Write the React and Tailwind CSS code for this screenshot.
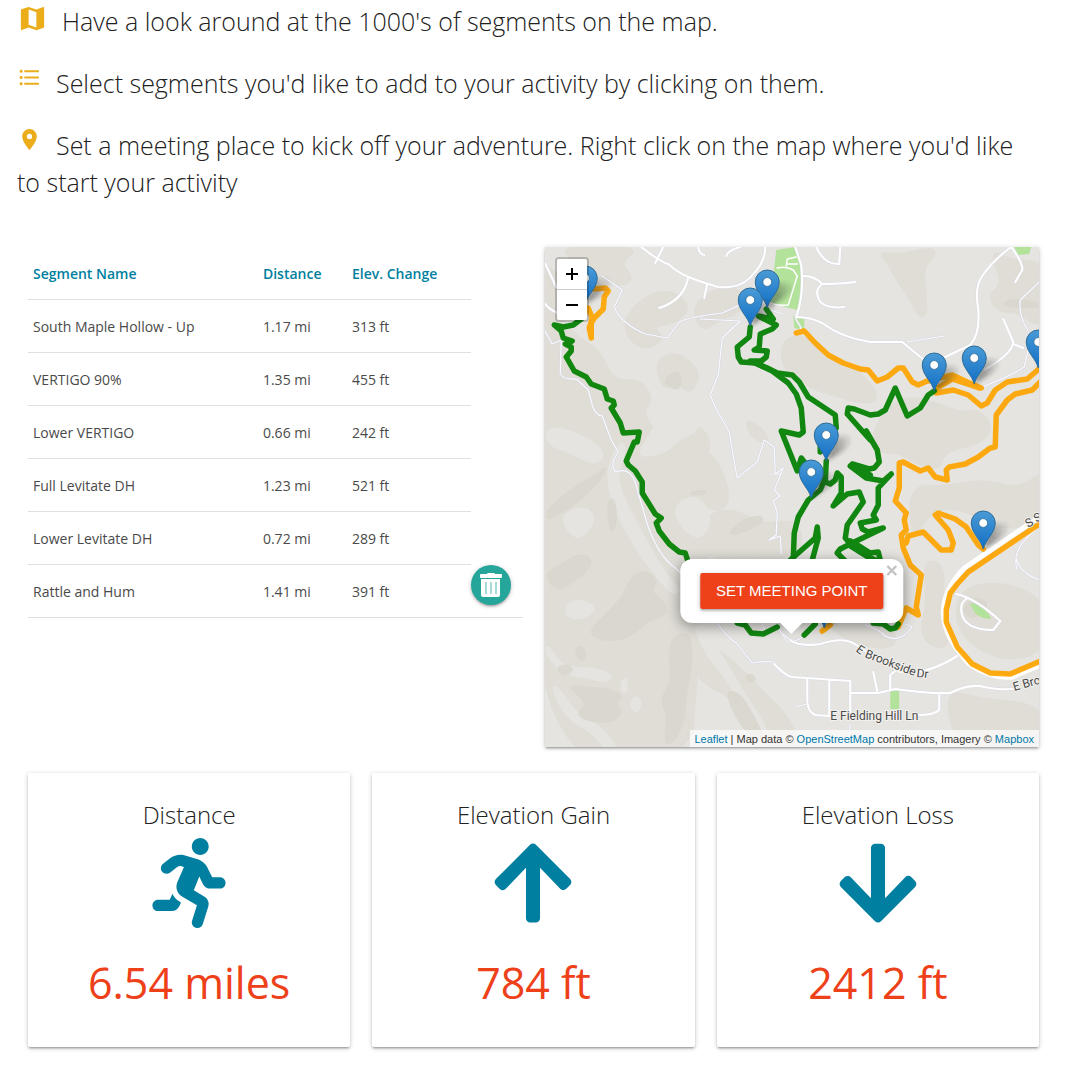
import React from "react";
import { MdMap, MdFormatListBulleted, MdPlace } from "react-icons/md";
import { FaRunning, FaArrowUp, FaArrowDown } from "react-icons/fa";

const segments = [
  ["South Maple Hollow - Up", "1.17 mi", "313 ft"],
  ["VERTIGO 90%", "1.35 mi", "455 ft"],
  ["Lower VERTIGO", "0.66 mi", "242 ft"],
  ["Full Levitate DH", "1.23 mi", "521 ft"],
  ["Lower Levitate DH", "0.72 mi", "289 ft"],
  ["Rattle and Hum", "1.41 mi", "391 ft"],
];

const totals = [
  { title: "Distance", Icon: FaRunning, value: "6.54 miles" },
  { title: "Elevation Gain", Icon: FaArrowUp, value: "784 ft" },
  { title: "Elevation Loss", Icon: FaArrowDown, value: "2412 ft" },
];

const hills = [
  "530,262 556,270 568,300 560,322 574,336 600,352 612,382 640,380 652,400 640,412 660,440 690,420 712,440 700,470 716,500 690,520 712,560 690,600 700,640 694,690 690,760 530,760",
  "560,247 640,247 618,262 634,280 612,286 600,276 590,290 576,262",
  "640,300 668,290 690,306 676,322 650,326 664,340 640,350 622,326",
  "700,298 728,286 745,296 740,312 716,320 704,330 694,316",
  "655,362 676,352 700,372 690,394 676,380 664,390",
  "783,340 806,336 826,356 860,372 880,400 860,402 834,394 806,386 782,366",
  "880,253 900,256 928,249 936,252 922,268 924,290 926,316 918,314 912,300 900,284 888,262",
  "990,250 1012,262 1045,262 1045,330 1016,310 1000,312 988,296 1004,284",
  "700,520 730,508 762,526 800,520 800,560 700,560",
  "900,396 938,404 960,414 980,410 992,430 976,444 944,450 938,470 916,462 900,452 880,452 872,430",
  "910,486 946,488 980,480 1020,490 1045,470 1045,520 1000,530 960,506 930,510 912,540",
  "960,590 1000,582 1045,600 1045,650 1008,660 976,648 956,624",
  "924,560 944,566 940,610 950,650 920,640 928,600",
  "690,640 720,650 760,690 790,720 800,755 770,755 740,700 696,680",
  "944,690 980,700 1045,706 1045,755 960,755",
  "748,420 764,432 768,442 758,440 748,430",
  "700,448 718,462 730,500 716,512 700,500",
  "816,590 870,600 900,640 880,650 830,632",
];

const valleys = [
  "548,426 580,434 606,452 596,466 570,452 546,444",
  "660,420 690,412 706,402 700,430 676,440 668,452 636,458 648,436",
  "562,514 586,506 596,520 580,540 566,530",
  "570,600 590,602 596,612 576,620 564,614",
  "545,642 560,664 574,668 592,668 612,674 608,682 588,678 566,674 548,660",
  "550,684 562,692 574,712 596,724 612,740 616,750 606,750 592,732 566,718",
  "680,500 700,496 712,520 700,540 684,530 674,514",
  "692,620 712,640 730,670 748,700 768,730 762,734 742,706 726,678 704,652",
  "620,440 626,450 614,480 640,530 662,570 680,590 672,596 640,556 612,506 606,470",
  "638,714 641,700 634,696 630,706",
  "622,680 627,678 626,694 621,690",
];

const ridges = [
  "546,512 562,496 580,484 592,478 608,464 600,480 580,500 562,512 548,520",
  "608,502 613,498 616,510 615,528 611,532 608,518",
  "546,572 560,566 576,554 592,558 588,570 574,580 562,590 550,584",
  "588,632 606,614 622,598 630,578 644,570 658,580 650,592 664,602 668,614 648,620 636,632 620,640 600,640",
  "668,650 676,634 690,634 692,662 686,690 684,720 674,742 664,744 668,716 660,700 672,680",
  "566,684 588,688 604,688 624,696 614,704 622,712 612,722 590,722 576,714 588,704",
  "664,380 676,370 682,380 678,390 668,386",
  "726,536 740,522 758,515 764,520 750,530",
  "726,690 740,694 752,714 764,738 756,742 742,726 732,710",
  "1000,304 1018,298 1045,306 1020,308",
  "962,610 974,596 990,604 972,620",
  "574,648 582,646 586,656 580,662",
  "556,668 566,664 574,670 564,676",
  "690,492 704,490 706,494 692,495",
  "746,676 752,674 756,680 748,682",
];

const roads = [
  "M544,262 Q549,272 556,287 M544,303 Q550,311 560,314",
  "M641,247 Q660,262 668,264 Q677,272 686,276 Q700,282 718,287 Q742,289 753,274 Q765,262 765,247",
  "M688,277 Q684,300 659,308 M707,284 L704,298 M655,263 L663,247 M698,247 Q699,254 704,255 M726,256 Q728,250 740,247",
  "M795,247 L801,265 Q804,295 796,317 Q810,317 822,323 Q842,338 870,342 L902,342 L925,361",
  "M803,276 Q815,276 822,284 Q840,284 855,282 M822,284 Q813,290 820,302 Q828,309 844,307 M816,247 Q824,265 839,264 L840,247",
  "M945,357 L970,345 Q980,334 978,309 Q974,287 982,276 Q993,260 1011,247 Q1023,263 1022,270 L1015,282 M1003,319 L1013,342 Q1012,354 984,370 M1013,344 L1023,348",
  "M790,640 Q798,647 820,644 Q844,636 856,645 Q884,664 900,672 Q925,676 957,656",
  "M774,664 Q785,676 792,677 L850,681 L850,712 M807,679 L807,702 Q808,712 815,715 L830,716 M829,681 L829,714 M850,693 L878,693 L895,689 Q930,694 950,693 Q970,683 984,687 Q1005,691 1016,688 M873,672 L877,691 M890,690 L890,675 L896,670 M939,695 L939,710 Q934,715 918,715",
  "M956,594 Q975,598 1000,621 L993,630 Q963,630 961,611 Q960,603 966,599",
];

const trails = [
  "M602,276 L622,290 L614,307 Q620,323 645,334 L667,338 L679,322 Q689,317 722,313 L744,303 M700,319 L740,321 L722,338 L718,375 L710,395 L715,407 L729,432 L734,462 L737,478 L757,462 L764,440 L774,447 L775,474 L783,468 L774,490 L780,496 L773,501 L777,512 L776,535 L769,540 L780,536 L781,554 M781,474 L770,474",
  "M544,330 L552,344 L561,340 L560,374 Q564,380 576,379 L588,390 L592,405 Q595,415 602,416 L611,440 L618,452 Q609,464 615,472 Q631,466 636,486 L647,524 Q658,556 675,568 L700,590 Q716,630 736,643 L752,663 Q763,661 774,662 L780,672 L790,677",
  "M907,342 L944,336 M1039,282 L1020,300 Q1018,316 1028,331 M982,387 Q1010,376 1024,367 L1028,350 M757,612 L765,631 M774,622 L787,642 Q802,642 816,624 M865,625 Q880,630 885,636 Q900,644 912,627 L905,624 M795,318 L801,328 L796,334 M795,644 L780,632 M1016,559 Q1020,573 1039,580 M1035,530 Q1010,550 1017,570 M770,310 L783,314 M850,724 L848,740 M795,707 L807,704",
];

const greenTrails = [
  "581,319 573,325 563,327 554,325 561,331 563,338 572,341 565,344 571,347 571,351 566,357 574,371 586,377 591,384 604,389 607,399 613,401 614,405 611,408 620,423 623,433 639,432 637,442 634,442 626,461 628,465 635,471 642,482 642,493 655,514 661,518 656,523 659,531 669,544 679,552 685,553 688,562",
  "750,327 749,337 737,347 738,357 741,362 755,363 772,371 788,383 796,394 801,408 803,432 799,435 781,431 797,471 801,458 807,466",
  "766,309 773,319 758,316 776,325 772,329 760,334 759,347 754,350 767,351 766,357 761,361 750,361 767,368 777,373 792,375 799,382 808,397 823,407 835,415 836,428 820,445 820,452",
  "826,461 825,482 830,484 835,480 837,473 841,477 841,493 833,506 847,494 859,492 863,502 847,525 845,538 850,544 868,554",
  "825,478 820,490 808,500 798,517 794,533 793,560",
  "790,560 815,538 817,527 818,538 812,560",
  "870,440 847,414 848,408 854,409 870,415 878,414 885,410 895,388 907,416 920,408 925,400 928,395 934,391",
  "866,431 877,450 879,462 874,468 869,469 852,464 870,475",
  "850,466 866,478 883,481 891,474 878,488 878,505 873,515 876,520 860,523 862,529 868,532 883,528 852,543 840,549 837,553 845,561",
  "850,541 862,548 870,553 878,552 880,560",
  "850,546 866,556 880,562",
  "737,623 745,625 751,633 763,634 777,627",
  "804,635 815,624",
  "873,623 883,624 890,629 895,628 898,624",
];

const orangeTrails = [
  "593,289 605,288 608,291 604,297 603,309 594,318 591,323 591,338 589,328 592,318 588,308",
  "796,333 804,331 815,343 828,355 843,363 860,369 868,370 877,381 887,377 898,368 903,368 912,382 918,385 927,381 940,378 952,375 967,382 981,388",
  "937,388 952,379 967,384 979,388",
  "936,393 953,390 968,395 981,406 987,403 995,390 1007,382 1027,379 1042,366",
  "1042,380 1032,390 1015,394 1007,400 996,415 995,447 990,448 978,457 965,464 949,467 946,470 947,480 935,477 928,468 920,471 903,462 899,463 899,488 895,501 906,513 904,520 906,530 901,535 903,548 910,565 921,575 916,607 918,615 906,608 898,627",
  "906,543 908,536 923,532 941,550 951,550 953,543 948,530 935,515 938,513 955,519 966,527 978,545 983,549",
  "822,631 830,625",
  "1045,520 968,572 957,584 950,593 946,610 946,622 957,647 972,664 990,673 1010,674 1045,659",
];

const markers = [
  [585, 304], [767, 308], [750, 326], [1038, 368], [974, 384],
  [934, 391], [826, 461], [811, 498], [983, 549], [824, 628],
];

// Rounds the corners of a terrain outline by curving through edge midpoints.
function smooth(points) {
  const p = points.split(" ").map((s) => s.split(",").map(Number));
  const mid = (a, b) => `${(a[0] + b[0]) / 2},${(a[1] + b[1]) / 2}`;
  const start = mid(p[p.length - 1], p[0]);
  return `M${start} ` + p.map((q, i) => `Q${q[0]},${q[1]} ${mid(q, p[(i + 1) % p.length])}`).join(" ") + "Z";
}

function Marker({ x, y }) {
  return (
    <g transform={`translate(${x} ${y})`}>
      <path d="M0 0 L8 -22 Q18 -28 24 -23 Q26 -17 15 -9 Z" fill="url(#shade)" filter="url(#soft)" />
      <path
        d="M0 0 C-2 -9 -12 -16 -12 -26 A12 12 0 0 1 12 -26 C12 -16 2 -9 0 0 Z"
        fill="url(#pin)"
        stroke="#2e6c97"
        strokeWidth="1"
      />
      <circle cy="-26" r="4.4" fill="#fff" stroke="#2e6c97" strokeWidth="0.8" />
    </g>
  );
}

function MapArt() {
  return (
    <svg
      className="absolute inset-0 h-full w-full"
      viewBox="544 247 496 500"
      preserveAspectRatio="xMidYMid slice"
      role="img"
      aria-label="Trail map"
    >
      <defs>
        <linearGradient id="pin" x1="0" y1="0" x2="0" y2="1">
          <stop offset="0" stopColor="#4a9bd6" />
          <stop offset="1" stopColor="#126fc6" />
        </linearGradient>
        <linearGradient id="shade" x1="0" y1="0.4" x2="1" y2="0">
          <stop offset="0" stopColor="#222" stopOpacity="0.5" />
          <stop offset="1" stopColor="#222" stopOpacity="0.05" />
        </linearGradient>
        <filter id="soft" x="-50%" y="-50%" width="200%" height="200%">
          <feGaussianBlur stdDeviation="2" />
        </filter>
      </defs>
      <rect x="544" y="247" width="496" height="500" fill="#e5e4e0" />
      {hills.map((p) => <path key={p} d={smooth(p)} fill="#dfddd6" stroke="#dfddd6" strokeWidth="4" />)}
      {valleys.map((p) => <path key={p} d={smooth(p)} fill="#e5e4e0" stroke="#e5e4e0" strokeWidth="2" />)}
      {ridges.map((p) => <path key={p} d={smooth(p)} fill="#d8d5cc" stroke="#d8d5cc" strokeWidth="2" opacity="0.75" />)}
      <g fill="#b3e29a">
        <path d="M776,250 L795,247 L801,265 L802,300 L797,310 L770,303 Z" />
        <path d="M1014,247 L1031,247 L1029,254 L1018,255 Z M793,316 L804,319 V330 L794,328 Z" />
        <path d="M970,603 Q985,605 991,619 Q974,619 970,603 Z M890,691 H899 V709 H890 Z" />
      </g>
      <g fill="none" strokeLinejoin="round" strokeLinecap="round">
        <path d="M777,268 Q786,266 793,270 L797,276 L788,305 Q778,306 770,303 M786,266 L787,259 L796,257 M787,264 L797,264" stroke="#fff" strokeWidth="1.5" />
        {trails.map((d) => <path key={d} d={d} stroke="#d5d6e2" strokeWidth="2.2" />)}
        {trails.map((d) => <path key={d + "f"} d={d} stroke="#fafafd" strokeWidth="1.2" />)}
        {roads.map((d) => <path key={d} d={d} stroke="#d9dae5" strokeWidth="3" />)}
        {roads.map((d) => <path key={d + "f"} d={d} stroke="#fff" strokeWidth="2.1" />)}
        <path d="M1045,513 L964,568 Q943,590 943,613 Q944,638 969,664 Q990,679 1012,677 L1045,663" stroke="#fff" strokeWidth="5" />
        <g stroke="#ffa500" strokeWidth="5.5" opacity="0.92">
          {orangeTrails.map((p) => <polyline key={p} points={p} />)}
        </g>
        <g stroke="#008000" strokeWidth="5.5" opacity="0.92">
          {greenTrails.map((p) => <polyline key={p} points={p} />)}
        </g>
      </g>
      <g
        fill="#4a4a4a"
        stroke="#f2f1ee"
        strokeWidth="2"
        paintOrder="stroke"
        fontFamily="Roboto, sans-serif"
        fontSize="12"
      >
        <text transform="translate(855 651) rotate(36)">E</text>
        <text transform="translate(864 657) rotate(21)">Brookside</text>
        <text transform="translate(916 677) rotate(6)">Dr</text>
        <text transform="translate(1014 691) rotate(-16)">E Bro</text>
        <text transform="translate(1028 528) rotate(-32)">S S</text>
        <text x="830" y="720">E Fielding Hill Ln</text>
      </g>
      {markers.map(([x, y]) => <Marker key={`${x}-${y}`} x={x} y={y} />)}
    </svg>
  );
}

const depth = "shadow-[0_2px_2px_0_rgba(0,0,0,0.14),0_3px_1px_-2px_rgba(0,0,0,0.12),0_1px_5px_0_rgba(0,0,0,0.2)]";

function TrailMap() {
  return (
    <section className={`relative isolate h-[500px] overflow-hidden font-['Liberation_Sans',sans-serif] ${depth}`}>
      <MapArt />
      <div className="absolute left-2.5 top-2.5 flex flex-col rounded-[4px] border-2 border-black/20 bg-clip-padding">
        <button type="button" aria-label="Zoom in" className="flex h-[31px] w-[30px] items-center justify-center rounded-t-[2px] border-b border-[#ccc] bg-white">
          <svg width="14" height="14" viewBox="0 0 14 14" stroke="#000" strokeWidth="2"><path d="M1 7H13M7 1V13" /></svg>
        </button>
        <button type="button" aria-label="Zoom out" className="flex h-[30px] w-[30px] items-center justify-center rounded-b-[2px] bg-white">
          <svg width="14" height="14" viewBox="0 0 14 14" stroke="#000" strokeWidth="2"><path d="M1 7H13" /></svg>
        </button>
      </div>
      <div className="absolute bottom-[124px] left-1/2 -translate-x-1/2">
        <div className="relative rounded-xl bg-white px-5 py-[14px] shadow-[0_3px_14px_rgba(0,0,0,0.4)]">
          <button type="button" className={`h-9 whitespace-nowrap rounded-[2px] bg-[#ee4019] px-4 text-[15px] text-white ${depth}`}>
            SET MEETING POINT
          </button>
          <button type="button" aria-label="Close popup" className="absolute right-[6px] top-[6px]">
            <svg width="11" height="11" viewBox="0 0 11 11" stroke="#c3c3c3" strokeWidth="2.4"><path d="M1 1L10 10M10 1L1 10" /></svg>
          </button>
        </div>
        <svg className="absolute left-1/2 top-full -translate-x-1/2" width="22" height="11" viewBox="0 0 22 11"><path d="M0 0H22L11 11Z" fill="#fff" /></svg>
      </div>
      <div className="absolute bottom-0 right-0 whitespace-nowrap bg-white/70 px-[5px] pt-px text-[11px] leading-4 text-[#333]">
        <a href="#leaflet" className="text-[#0078a8]">Leaflet</a> | Map data ©{" "}
        <a href="#osm" className="text-[#0078a8]">OpenStreetMap</a> contributors, Imagery ©{" "}
        <a href="#mapbox" className="text-[#0078a8]">Mapbox</a>
      </div>
    </section>
  );
}

function SegmentTable() {
  return (
    <table className="w-full table-fixed border-separate border-spacing-0 self-start text-left text-sm text-[#4a4a4a]">
      <colgroup>
        <col className="w-[46.5%]" />
        <col className="w-[18%]" />
        <col className="w-[25%]" />
        <col className="w-[10.5%]" />
      </colgroup>
      <thead>
        <tr className="h-[53px] text-[#007fa0]">
          {["Segment Name", "Distance", "Elev. Change"].map((h) => (
            <th key={h} className="whitespace-nowrap border-b border-[#e0e0e0] px-[5px] pt-0.5 font-semibold">{h}</th>
          ))}
        </tr>
      </thead>
      <tbody>
        {segments.map((row, i) => (
          <tr key={row[0]} className="h-[53px]">
            {row.map((cell) => (
              <td key={cell} className="border-b border-[#e0e0e0] px-[5px] pt-0.5">{cell}</td>
            ))}
            {i === segments.length - 1 && (
              <td className="border-b border-[#e0e0e0] p-0 align-top">
                <button
                  type="button"
                  aria-label="Delete segment"
                  className={`flex size-10 items-center justify-center rounded-full bg-[#26a69a] ${depth}`}
                >
                  <svg width="22" height="24" viewBox="0 0 22 24" fill="#fff">
                    <path d="M7 1Q7 0 8 0H14Q15 0 15 1H21Q22 1 22 2V4Q22 5 21 5H1Q0 5 0 4V2Q0 1 1 1Z" />
                    <path d="M1 6H20V22Q20 24 18 24H3Q1 24 1 22Z" />
                    <path d="M6 9V21M11 9V21M16 9V21" stroke="#a8dbd7" strokeWidth="2" />
                  </svg>
                </button>
              </td>
            )}
          </tr>
        ))}
      </tbody>
    </table>
  );
}

export default function App() {
  return (
    <main className="bg-white pb-[30px] pl-[17px] pr-[41px] pt-[3px] font-['Open_Sans',sans-serif] text-[#212121]">
      <div className="space-y-[25px] pr-3 text-[25px] font-light leading-[37px]">
        <p>
          <MdMap className="mr-[14px] inline-block size-[31px] align-top text-[#ebad1a]" />
          Have a look around at the 1000's of segments on the map.
        </p>
        <p>
          <MdFormatListBulleted className="mr-[14px] inline-block size-[25px] align-top text-[#ebad1a]" />
          Select segments you'd like to add to your activity by clicking on them.
        </p>
        <p>
          <MdPlace className="mr-[14px] inline-block size-[25px] align-top text-[#ebad1a]" />
          Set a meeting place to kick off your adventure. Right click on the map where you'd like to start your activity
        </p>
      </div>
      <div className="mt-[46px] grid grid-cols-2 gap-[22px] px-[11px]">
        <SegmentTable />
        <TrailMap />
      </div>
      <div className="mt-[26px] grid grid-cols-3 gap-[22px] px-[11px]">
        {totals.map(({ title, Icon, value }) => (
          <section key={title} className={`flex flex-col items-center rounded-[2px] bg-white pb-[30px] pt-6 ${depth}`}>
            <h2 className="text-2xl font-light leading-9">{title}</h2>
            <Icon className="mt-[5px] size-[90px] text-[#007fa0]" />
            <p className="mt-[21px] text-[43px] leading-[68px] text-[#ee4019]">{value}</p>
          </section>
        ))}
      </div>
    </main>
  );
}
